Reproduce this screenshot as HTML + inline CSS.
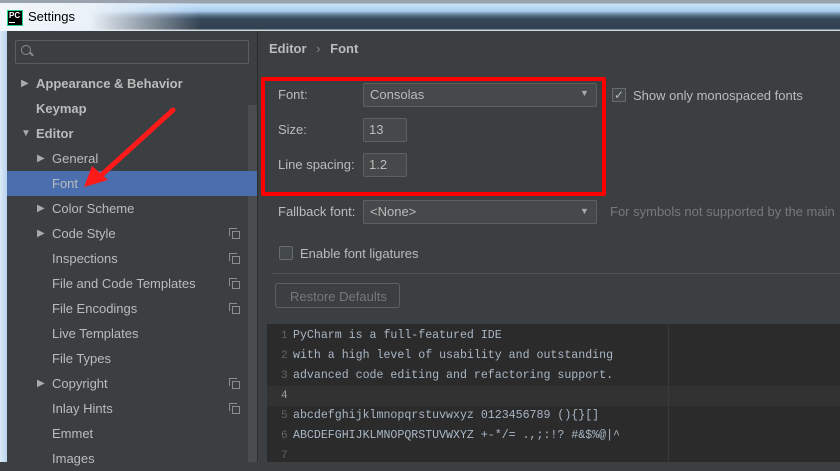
<!DOCTYPE html>
<html><head><style>
*{margin:0;padding:0;box-sizing:border-box}
body{width:840px;height:462px;overflow:hidden;background:#3c3f41;font-family:"Liberation Sans",sans-serif;font-size:13px;color:#bbbbbb;position:relative}
.abs{position:absolute}
.tb{left:0;top:0;width:840px;height:31px;background:linear-gradient(to bottom,#9aa3ad 0,#9aa3ad 3px,#c9e2f7 4px,#a9cdef 11px,#5d7590 15px,#35475a 19px,#33414f 29px,#cfd6de 30px,#cfd6de 31px)}
.tbl{left:0;top:3px;width:200px;height:28px;background:linear-gradient(to right,#f2f6fa 0,#eaf1f8 45%,rgba(230,240,250,0) 100%)}
.side{left:0;top:31px;width:7px;height:431px;background:linear-gradient(to right,#dbe9f7,#b8d3ee)}
.nav{left:7px;top:31px;width:250px;height:431px;background:#3c3f41}
.item{position:absolute;left:0;width:250px;height:25px;line-height:25px;font-size:13px;color:#bbbbbb}
.arr{position:absolute;font-size:10px;color:#aaaaaa}
.cp{position:absolute;left:225px;top:10px;width:8px;height:8px;border:1px solid #8a8c8e}
.cp:after{content:"";position:absolute;left:-4px;top:-4px;width:7px;height:7px;border-left:1px solid #8a8c8e;border-top:1px solid #8a8c8e}
.inp{border:1px solid #5e6060;background:#45494a;border-radius:2px}
.lbl{position:absolute;font-size:13px;color:#bbbbbb}
.code{font-family:"Liberation Mono",monospace;font-size:11.6px;color:#a9b7c6;position:absolute;left:293px}
.ln{font-family:"Liberation Mono",monospace;font-size:11px;color:#606366;position:absolute;left:281px}
</style></head><body>
<div class="abs tb"></div>
<div class="abs tbl"></div>
<div class="abs" style="left:7px;top:10px;width:16px;height:16px;background:#000;border:1px solid #21d789;color:#fff;font-size:8px;font-weight:bold;line-height:9px;padding-left:1px">PC<div style="width:6px;height:1px;background:#fff;margin-top:2px"></div></div>
<div class="abs" style="left:28px;top:9px;font-size:13px;color:#000">Settings</div>
<div class="abs side"></div>
<div class="abs nav">
  <div class="abs inp" style="left:8px;top:9px;width:234px;height:24px;background:#3c3f41;border-color:#5b5e60"></div>
  <div class="abs" style="left:14px;top:14px;width:10px;height:10px;border:1.5px solid #8a8c8e;border-radius:50%"></div>
  <div class="abs" style="left:22px;top:22px;width:5px;height:1.5px;background:#8a8c8e;transform:rotate(45deg)"></div>
  <div class="abs" style="left:241px;top:74px;width:9px;height:357px;background:#4a4d4f"></div>
  <div class="item" style="top:40px;left:0"><span class="arr" style="left:14px">▶</span><b style="position:absolute;left:29px">Appearance &amp; Behavior</b></div>
  <div class="item" style="top:65px"><b style="position:absolute;left:29px">Keymap</b></div>
  <div class="item" style="top:90px"><span class="arr" style="left:14px">▼</span><b style="position:absolute;left:29px">Editor</b></div>
  <div class="item" style="top:115px"><span class="arr" style="left:30px">▶</span><span style="position:absolute;left:45px">General</span></div>
  <div class="item" style="top:140px;background:#4b6eaf"><span style="position:absolute;left:45px">Font</span></div>
  <div class="item" style="top:165px"><span class="arr" style="left:30px">▶</span><span style="position:absolute;left:45px">Color Scheme</span></div>
  <div class="item" style="top:190px"><span class="arr" style="left:30px">▶</span><span style="position:absolute;left:45px">Code Style</span><i class="cp"></i></div>
  <div class="item" style="top:215px"><span style="position:absolute;left:45px">Inspections</span><i class="cp"></i></div>
  <div class="item" style="top:240px"><span style="position:absolute;left:45px">File and Code Templates</span><i class="cp"></i></div>
  <div class="item" style="top:265px"><span style="position:absolute;left:45px">File Encodings</span><i class="cp"></i></div>
  <div class="item" style="top:290px"><span style="position:absolute;left:45px">Live Templates</span></div>
  <div class="item" style="top:315px"><span style="position:absolute;left:45px">File Types</span></div>
  <div class="item" style="top:340px"><span class="arr" style="left:30px">▶</span><span style="position:absolute;left:45px">Copyright</span><i class="cp"></i></div>
  <div class="item" style="top:365px"><span style="position:absolute;left:45px">Inlay Hints</span><i class="cp"></i></div>
  <div class="item" style="top:390px"><span style="position:absolute;left:45px">Emmet</span></div>
  <div class="item" style="top:415px"><span style="position:absolute;left:45px">Images</span></div>
</div>
<div class="abs" style="left:257px;top:31px;width:1px;height:431px;background:#2b2b2b"></div>
<div class="abs" style="left:269px;top:41px;font-weight:bold;font-size:13px">Editor <span style="font-weight:normal;color:#888;margin:0 6px">›</span> Font</div>

<div class="lbl" style="left:278px;top:87px">Font:</div>
<div class="abs inp" style="left:363px;top:83px;width:234px;height:24px"></div>
<div class="lbl" style="left:370px;top:87px">Consolas</div>
<div class="abs" style="left:580px;top:88px;font-size:9px;color:#aaa">▼</div>
<div class="abs" style="left:612px;top:88px;width:14px;height:14px;border:1px solid #6b6b6b;background:#43494a;font-size:12px;line-height:12px;text-align:center;color:#bbb">✓</div>
<div class="lbl" style="left:633px;top:88px">Show only monospaced fonts</div>
<div class="lbl" style="left:278px;top:122px">Size:</div>
<div class="abs inp" style="left:363px;top:118px;width:44px;height:24px"></div>
<div class="lbl" style="left:369px;top:122px">13</div>
<div class="lbl" style="left:278px;top:157px">Line spacing:</div>
<div class="abs inp" style="left:363px;top:153px;width:44px;height:24px"></div>
<div class="lbl" style="left:369px;top:157px">1.2</div>
<div class="abs" style="left:261px;top:77px;width:345px;height:119px;border:4px solid #ff0000;border-radius:2px"></div>

<div class="lbl" style="left:278px;top:204px">Fallback font:</div>
<div class="abs inp" style="left:363px;top:200px;width:234px;height:24px"></div>
<div class="lbl" style="left:370px;top:204px">&lt;None&gt;</div>
<div class="abs" style="left:580px;top:206px;font-size:9px;color:#aaa">▼</div>
<div class="lbl" style="left:610px;top:204px;color:#787878;white-space:nowrap">For symbols not supported by the main</div>
<div class="abs" style="left:279px;top:246px;width:14px;height:14px;border:1px solid #6b6b6b;background:#43494a;border-radius:2px"></div>
<div class="lbl" style="left:300px;top:246px">Enable font ligatures</div>
<div class="abs" style="left:272px;top:273px;width:568px;height:1px;background:#515151"></div>
<div class="abs" style="left:275px;top:283px;width:125px;height:25px;border:1px solid #5e6060;border-radius:3px"></div>
<div class="lbl" style="left:290px;top:289px;color:#777">Restore Defaults</div>

<div class="abs" style="left:267px;top:324px;width:573px;height:138px;background:#2b2b2b"></div>
<div class="abs" style="left:267px;top:386px;width:573px;height:20px;background:#323232"></div>
<div class="abs" style="left:668px;top:325px;width:1px;height:137px;background:#3a3a3a"></div>
<div class="ln" style="top:330px">1</div><div class="code" style="top:329px">PyCharm is a full-featured IDE</div>
<div class="ln" style="top:350px">2</div><div class="code" style="top:349px">with a high level of usability and outstanding</div>
<div class="ln" style="top:370px">3</div><div class="code" style="top:369px">advanced code editing and refactoring support.</div>
<div class="ln" style="top:390px;color:#a4a3a3">4</div>
<div class="ln" style="top:410px">5</div><div class="code" style="top:409px">abcdefghijklmnopqrstuvwxyz 0123456789 (){}[]</div>
<div class="ln" style="top:430px">6</div><div class="code" style="top:429px">ABCDEFGHIJKLMNOPQRSTUVWXYZ +-*/= .,;:!? #&amp;$%@|^</div>
<div class="ln" style="top:450px">7</div>

<svg class="abs" style="left:70px;top:100px" width="120" height="100"><line x1="103" y1="10" x2="26" y2="80" stroke="#ff1a1a" stroke-width="5" stroke-linecap="round"/><polygon points="14,87 22,66 38,80" fill="#ff1a1a"/></svg>
</body></html>
